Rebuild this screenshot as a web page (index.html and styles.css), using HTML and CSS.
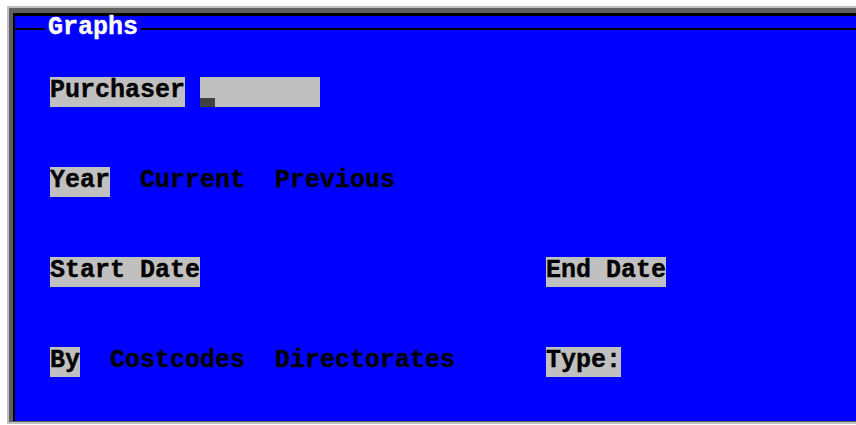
FILE: index.html
```html
<!DOCTYPE html>
<html lang="en">
<head>
<meta charset="utf-8">
<title>Graphs</title>
<link rel="stylesheet" href="styles.css">
</head>
<body>
<div class="frame">
  <div class="screen">
    <div class="title-row">
      <span class="rule rule-lead"></span>
      <span class="title">Graphs</span>
      <span class="rule rule-fill"></span>
    </div>
    <div class="form">
      <div class="row row-entry">
        <span class="label">Purchaser</span>
        <span class="field"><span class="cursor"></span></span>
      </div>
      <div class="row row-choice">
        <span class="label">Year</span>
        <span class="option">Current</span>
        <span class="option">Previous</span>
      </div>
      <div class="row">
        <div class="col"><span class="label">Start Date</span></div>
        <span class="label">End Date</span>
      </div>
      <div class="row">
        <div class="col row-choice">
          <span class="label">By</span>
          <span class="option">Costcodes</span>
          <span class="option">Directorates</span>
        </div>
        <span class="label">Type:</span>
      </div>
    </div>
  </div>
</div>
</body>
</html>
```

FILE: styles.css
```css
html, body {
  margin: 0;
  padding: 0;
  background: #ffffff;
  overflow: hidden;
}

/* window chrome around the text-mode screen */
.frame {
  margin: 6px 0 0 7px;
  border-top: 2px solid #c0c0c0;
  border-left: 2px solid #c0c0c0;
  border-bottom: 2px solid #c0c0c0;
  background: #606060;
  padding: 5px 0 1px 4px;
}

.screen {
  height: 405px;
  background: #0000ff;
  border-top: 3px solid #000000;
  border-left: 2px solid #000000;
  font-family: "Liberation Mono", "DejaVu Sans Mono", monospace;
  font-weight: bold;
  font-size: 25px;
  color: #000000;
  -webkit-text-stroke: 0.4px currentColor;
}

/* boxed heading: a rule interrupted by the title */
.title-row {
  display: flex;
  align-items: flex-start;
  height: 23px;
  line-height: 23px;
}

.rule {
  height: 2px;
  margin-top: 12px;
  background: #000000;
}

.rule-lead {
  width: 30px;
  flex: none;
}

.rule-fill {
  flex: 1;
}

.title {
  color: #ffffff;
  margin: 0 3px;
  white-space: pre;
}

.form {
  margin-top: 38px;
  padding-left: 35px;
  display: flex;
  flex-direction: column;
  gap: 60px;
}

.row {
  display: flex;
  height: 30px;
}

.row-entry {
  gap: 15px;
}

.row-choice {
  gap: 30px;
}

.col {
  display: flex;
  width: 496px;
  flex: none;
}

.label,
.option {
  line-height: 27px;
  padding-bottom: 3px;
  white-space: pre;
}

.label {
  background: #c0c0c0;
}

.field {
  width: 120px;
  height: 30px;
  background: #c0c0c0;
  display: flex;
  align-items: flex-end;
}

.cursor {
  width: 15px;
  height: 9px;
  background: #404040;
}
```
